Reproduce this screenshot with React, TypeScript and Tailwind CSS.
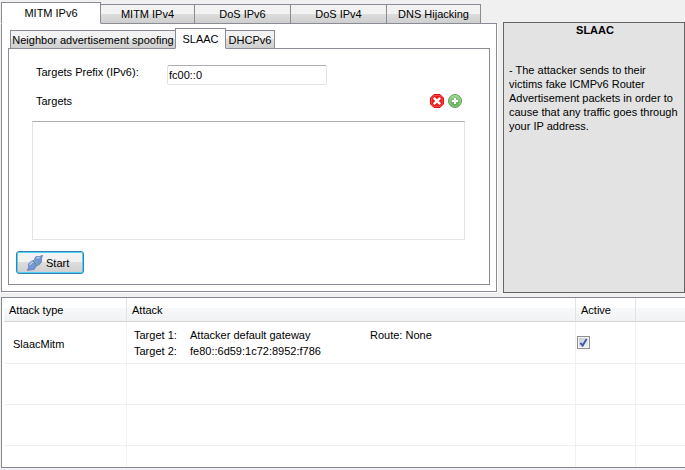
import { useState } from "react";

const mainTabs = [
  { label: "MITM IPv6", width: "w-[100px]" },
  { label: "MITM IPv4", width: "w-[95px]" },
  { label: "DoS IPv6", width: "w-[97px]" },
  { label: "DoS IPv4", width: "w-[97px]" },
  { label: "DNS Hijacking", width: "w-[95px]" },
];

const attackTabs = [
  { label: "Neighbor advertisement spoofing", width: "w-[166px]" },
  { label: "SLAAC", width: "w-[51px]" },
  { label: "DHCPv6", width: "w-[50px]" },
];

type Tab = { label: string; width: string };

function TabStrip({
  tabs,
  name,
  active,
  onSelect,
  height,
  activeHeight,
}: {
  tabs: Tab[];
  name: string;
  active: string;
  onSelect: (label: string) => void;
  height: string;
  activeHeight: string;
}) {
  return (
    <div role="tablist" aria-label={name} className="relative -mb-px flex items-end">
      {tabs.map((tab) => {
        const selected = tab.label === active;
        return (
          <button
            key={tab.label}
            type="button"
            role="tab"
            aria-selected={selected}
            onClick={() => onSelect(tab.label)}
            className={`shrink-0 whitespace-nowrap border border-[#898c95] not-first:-ml-px ${tab.width} ${
              selected
                ? `z-10 border-b-white bg-white ${activeHeight}`
                : `bg-linear-to-b from-[#f2f2f2] from-50% via-[#dddddd] via-50% to-[#cfcfcf] ${height}`
            }`}
          >
            {tab.label}
          </button>
        );
      })}
    </div>
  );
}

function RemoveIcon() {
  return (
    <svg viewBox="0 0 16 16" className="size-4" aria-hidden="true">
      <path d="M5 1.5h6l3.5 3.5v6l-3.5 3.5H5L1.5 11V5z" fill="#ee1c1c" stroke="#e00c0c" strokeLinejoin="round" />
      <path d="M5.4 2.5h5.2l2.9 2.9v5.2l-2.9 2.9H5.4l-2.9-2.9V5.4z" fill="none" stroke="#ff6a6a" strokeWidth=".6" />
      <path d="M4.8 4.8l6.4 6.4M11.2 4.8l-6.4 6.4" stroke="#fff" strokeWidth="2.4" />
    </svg>
  );
}

function AddIcon() {
  return (
    <svg viewBox="0 0 16 16" className="size-4" aria-hidden="true">
      <defs>
        <linearGradient id="add-fill" x1="0" y1="0" x2="0" y2="1">
          <stop offset="0" stopColor="#9fd392" />
          <stop offset="1" stopColor="#57a74a" />
        </linearGradient>
      </defs>
      <circle cx="8" cy="8" r="6.5" fill="url(#add-fill)" stroke="#5f9f55" />
      <circle cx="8" cy="8" r="5.4" fill="none" stroke="#b4dfaa" strokeWidth=".6" />
      <path d="M8 5v6M5 8h6" stroke="#fff" strokeWidth="2" />
    </svg>
  );
}

function ConnectIcon() {
  return (
    <svg viewBox="0 0 16 16" className="size-4" aria-hidden="true">
      <path
        d="M.3 15.4 1.6 12.4 1.6 8.8 4.2 6.4l3-1.2L8.6 1.8 12.6 1.4 15.6.3 14.6 3.2l-.1 3.7-2.6 3-2.8 1.1-1.9 3.5-3.7.4z"
        fill="#7698d2"
        stroke="#5578b4"
        strokeWidth=".7"
        strokeLinejoin="round"
      />
      <path d="M2.6 10 4.8 7.6l1.8-.8M9.6 2.9l3-.3" stroke="#b9cff0" strokeWidth="1.4" fill="none" />
      <path d="M6.2 5.5l3.9 5.4" stroke="#496fa8" strokeWidth="1" />
      <path d="M7.2 5.2l3.4 5.2" stroke="#8fc08c" strokeWidth="1" />
    </svg>
  );
}

function Check({ checked, onChange }: { checked: boolean; onChange: () => void }) {
  return (
    <label className="relative block size-[13px]">
      <input
        type="checkbox"
        aria-label="Active"
        checked={checked}
        onChange={onChange}
        className="peer block size-[13px] appearance-none border border-[#8e8f8f] bg-linear-to-br from-[#c3c8d2] to-[#f8f8f8] shadow-[inset_0_0_0_1px_#f4f4f4]"
      />
      <svg viewBox="0 0 13 13" className="pointer-events-none absolute inset-0 hidden peer-checked:block" aria-hidden="true">
        <path d="M3.4 6.8 5.6 9.5 9.6 3" fill="none" stroke="#3f57a4" strokeWidth="1.9" />
      </svg>
    </label>
  );
}

const headCell =
  "border-r border-b border-r-[#e2e3e5] border-b-[#d5d5d5] bg-linear-to-b from-white from-45% via-[#f7f8fa] via-45% to-[#f1f2f4] pl-[5px] text-left font-normal";
const cell = "border-r border-b border-[#f0f0f0]";

export default function App() {
  const [mainTab, setMainTab] = useState("MITM IPv6");
  const [attackTab, setAttackTab] = useState("SLAAC");
  const [prefix, setPrefix] = useState("fc00::0");
  const [active, setActive] = useState(true);

  return (
    <div className="min-h-screen bg-[#f0f0f0] pt-0.5 pb-0.5 pl-px font-['Liberation_Sans',Arial,sans-serif] text-[11px] leading-[14px] text-black">
      <div className="flex gap-[5px]">
        <section className="mb-px flex min-w-0 flex-1 flex-col">
          <TabStrip
            tabs={mainTabs}
            name="Attack families"
            active={mainTab}
            onSelect={setMainTab}
            height="h-5"
            activeHeight="h-[22px]"
          />
          <div className="mr-px flex-1 border border-[#898c95] bg-white p-1.5 pt-1 shadow-[1px_1px_0_#fff]">
            <TabStrip
              tabs={attackTabs}
              name="Attacks"
              active={attackTab}
              onSelect={setAttackTab}
              height="h-[19px] first:ml-0.5"
              activeHeight="h-[21px]"
            />
            <div role="tabpanel" aria-label={attackTab} className="border border-[#898c95] px-[7px] pt-4 pb-2.5">
              <div className="flex items-start pl-5">
                <label htmlFor="prefix" className="w-[131px] shrink-0">
                  Targets Prefix (IPv6):
                </label>
                <input
                  id="prefix"
                  type="text"
                  value={prefix}
                  onChange={(event) => setPrefix(event.target.value)}
                  className="h-5 w-40 rounded-[2px] border border-[#e2e3ea] border-t-[#abadb3] px-px outline-none"
                />
              </div>
              <div className="mt-2 flex items-center pr-[19px] pl-5">
                <label htmlFor="targets" className="mr-auto">
                  Targets
                </label>
                <button type="button" aria-label="Remove target" className="mr-0.5">
                  <RemoveIcon />
                </button>
                <button type="button" aria-label="Add target">
                  <AddIcon />
                </button>
              </div>
              <div className="mt-3 pr-[17px] pl-4">
                <textarea
                  id="targets"
                  className="block h-[119px] w-full resize-none border border-[#e2e3ea] border-t-[#abadb3] p-1 outline-none"
                />
              </div>
              <button
                type="button"
                className="mt-[11px] flex h-[23px] w-[68px] items-center gap-[3px] rounded-[3px] border border-[#3c7fb1] bg-linear-to-b from-[#f2f2f2] from-50% via-[#dddddd] via-50% to-[#cfcfcf] pl-2.5 shadow-[inset_0_0_0_1px_#4cd2f5]"
              >
                <ConnectIcon />
                Start
              </button>
            </div>
          </div>
        </section>
        <aside className="mt-5 w-[182px] shrink-0 border border-[#646464] bg-[#e3e3e3] pr-[3px] pl-[5px]">
          <h2 className="text-center font-bold">SLAAC</h2>
          <p className="mt-[26px]">
            - The attacker sends to their victims fake ICMPv6 Router Advertisement packets in order to cause that any
            traffic goes through your IP address.
          </p>
        </aside>
      </div>

      <div className="mt-1 border border-r-0 border-[#828790] bg-white pl-0.5">
        <table className="w-full table-fixed border-separate border-spacing-0">
          <colgroup>
            <col className="w-[123px]" />
            <col />
            <col className="w-[60px]" />
            <col className="w-[49px]" />
          </colgroup>
          <thead>
            <tr className="h-6">
              <th scope="col" className={headCell}>Attack type</th>
              <th scope="col" className={headCell}>Attack</th>
              <th scope="col" className={headCell}>Active</th>
              <td className={`${headCell} border-r-0`} />
            </tr>
          </thead>
          <tbody>
            <tr className="h-[42px]">
              <td className={`${cell} pt-0.5 pl-[9px]`}>SlaacMitm</td>
              <td className={`${cell} pl-[7px]`}>
                <div className="grid grid-cols-[56px_180px_1fr] gap-y-0.5">
                  <span>Target 1:</span>
                  <span>Attacker default gateway</span>
                  <span>Route: None</span>
                  <span>Target 2:</span>
                  <span>fe80::6d59:1c72:8952:f786</span>
                </div>
              </td>
              <td className={`${cell} pl-px`}>
                <Check checked={active} onChange={() => setActive(!active)} />
              </td>
              <td className={`${cell} border-r-0`} />
            </tr>
            {["h-[41px]", "h-[41px]", "h-[21px]"].map((height, row) => (
              <tr key={row} className={height}>
                {[0, 1, 2, 3].map((column) => (
                  <td
                    key={column}
                    className={`border-[#f0f0f0] ${column < 3 ? "border-r" : ""} ${row < 2 ? "border-b" : ""}`}
                  />
                ))}
              </tr>
            ))}
          </tbody>
        </table>
      </div>
    </div>
  );
}
